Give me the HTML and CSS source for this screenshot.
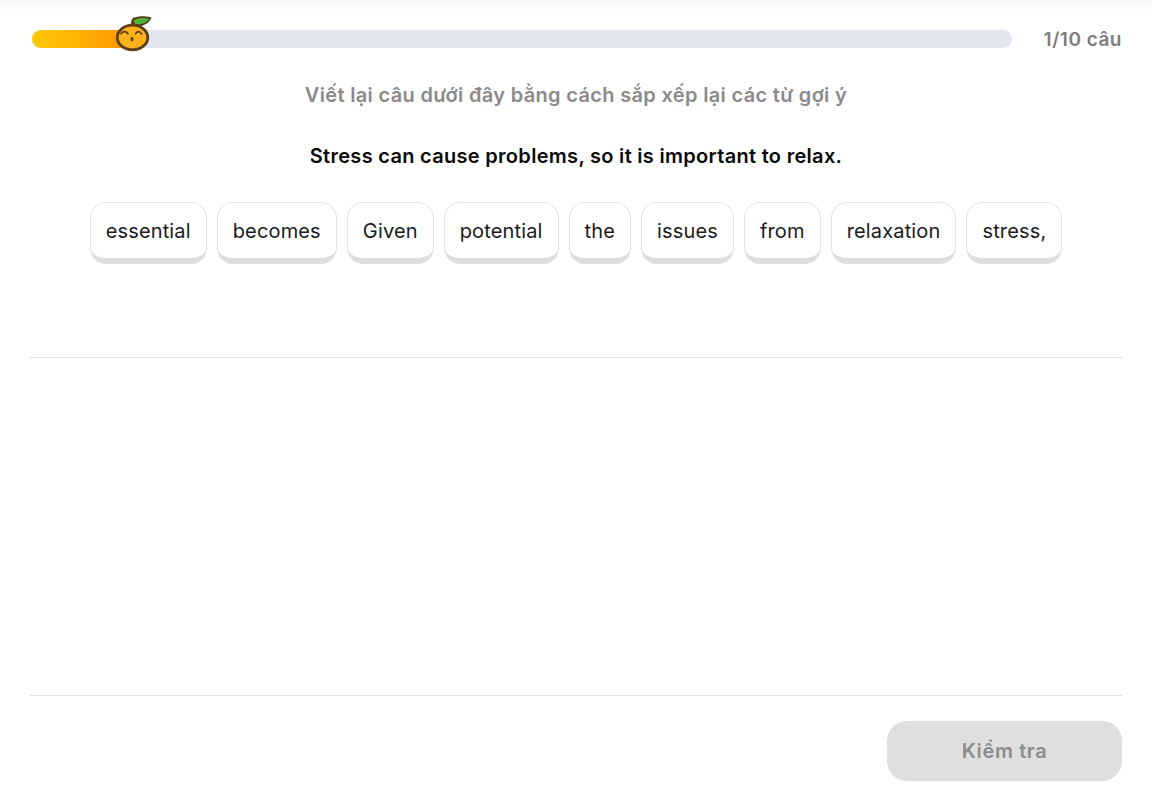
FILE: index.html
```html
<!DOCTYPE html>
<html lang="vi">
<head>
<meta charset="utf-8">
<title>Sắp xếp câu</title>
<link rel="stylesheet" href="styles.css">
</head>
<body>
<main class="page">
  <header class="progress-row">
    <div class="track">
      <div class="fill"></div>
      <svg class="mascot" width="36" height="36" viewBox="0 0 36 36" aria-hidden="true">
        <path d="M16 9 C16 6 16.500 4 18 2.500" fill="none" stroke="#5a3a12" stroke-width="2.200" stroke-linecap="round"/>
        <path d="M16.500 4 C20 0.800 28 0.300 34.500 2 C32 7.500 24 11 18.500 8.500 Z" fill="#4cae3c" stroke="#5a3a12" stroke-width="1.800" stroke-linejoin="round"/>
        <ellipse cx="16.500" cy="21.500" rx="15.300" ry="12.300" fill="#fbb11c" stroke="#5f3d14" stroke-width="2.800"/>
        <path d="M5 17.800 C6.500 14.800 10.500 14.800 12 17.800" fill="none" stroke="#5f3d14" stroke-width="1.800" stroke-linecap="round"/>
        <path d="M19.500 17.800 C21 14.800 24 14.800 25.500 17.800" fill="none" stroke="#5f3d14" stroke-width="1.800" stroke-linecap="round"/>
        <ellipse cx="16" cy="23" rx="1.500" ry="2.300" fill="#5f3d14"/>
      </svg>
    </div>
    <span class="count">1/10 câu</span>
  </header>

  <p class="instruction">Viết lại câu dưới đây bằng cách sắp xếp lại các từ gợi ý</p>
  <p class="sentence">Stress can cause problems, so it is important to relax.</p>

  <div class="chips">
    <button class="chip">essential</button>
    <button class="chip">becomes</button>
    <button class="chip">Given</button>
    <button class="chip">potential</button>
    <button class="chip">the</button>
    <button class="chip">issues</button>
    <button class="chip">from</button>
    <button class="chip">relaxation</button>
    <button class="chip">stress,</button>
  </div>

  <div class="answer"></div>

  <footer class="actions">
    <button class="check" disabled>Kiểm tra</button>
  </footer>
</main>
</body>
</html>
```
FILE: styles.css
```css
* { box-sizing: border-box; }

html, body {
  margin: 0;
  height: 100%;
  background: #fff;
}

body {
  font-family: "Inter", "Noto Sans", sans-serif;
  color: #111;
}

.page {
  height: 809px;
  padding: 0 30px;
  display: flex;
  flex-direction: column;
  box-shadow: inset 0 14px 12px -12px #ededed;
}

.progress-row {
  display: flex;
  align-items: center;
  justify-content: space-between;
  padding: 30px 0 0 2px;
  height: 48px;
}

.track {
  position: relative;
  width: 980px;
  height: 18px;
  border-radius: 9px;
  background: #e2e6ef;
}

.fill {
  width: 94px;
  height: 100%;
  border-radius: 9px 0 0 9px;
  background: linear-gradient(90deg, #ffc907, #ff9800);
}

.mascot {
  position: absolute;
  left: 84px;
  top: -14px;
}

.count {
  font-size: 19px;
  font-weight: 600;
  letter-spacing: 0.5px;
  color: #7d7d7d;
  white-space: nowrap;
}

.instruction {
  margin: 32px 0 0;
  height: 30px;
  line-height: 30px;
  text-align: center;
  font-size: 20px;
  font-weight: 600;
  letter-spacing: 0.33px;
  color: #8a8a8a;
}

.sentence {
  margin: 31px 0 0;
  height: 30px;
  line-height: 30px;
  text-align: center;
  font-size: 20px;
  font-weight: 600;
  letter-spacing: 0.3px;
  color: #0a0a0a;
}

.chips {
  display: flex;
  justify-content: center;
  gap: 10px;
  margin-top: 31px;
}

.chip {
  height: 62px;
  padding: 0 15px;
  border: 1px solid #e4e4e4;
  border-bottom: 6px solid #dedede;
  border-radius: 16px;
  background: #fff;
  font-family: inherit;
  font-size: 20px;
  font-weight: 400;
  letter-spacing: 0.15px;
  color: #1a1a1a;
}

.answer {
  height: 339px;
  margin-top: 93px;
  border-top: 1px solid #e3e3e3;
  border-bottom: 1px solid #e3e3e3;
}

.actions {
  display: flex;
  justify-content: flex-end;
  padding-top: 25px;
}

.check {
  width: 235px;
  height: 60px;
  border: 0;
  border-radius: 20px;
  background: #dfdfdf;
  font-family: inherit;
  font-size: 20px;
  font-weight: 600;
  letter-spacing: 0.6px;
  color: #8c8c8c;
}
```
